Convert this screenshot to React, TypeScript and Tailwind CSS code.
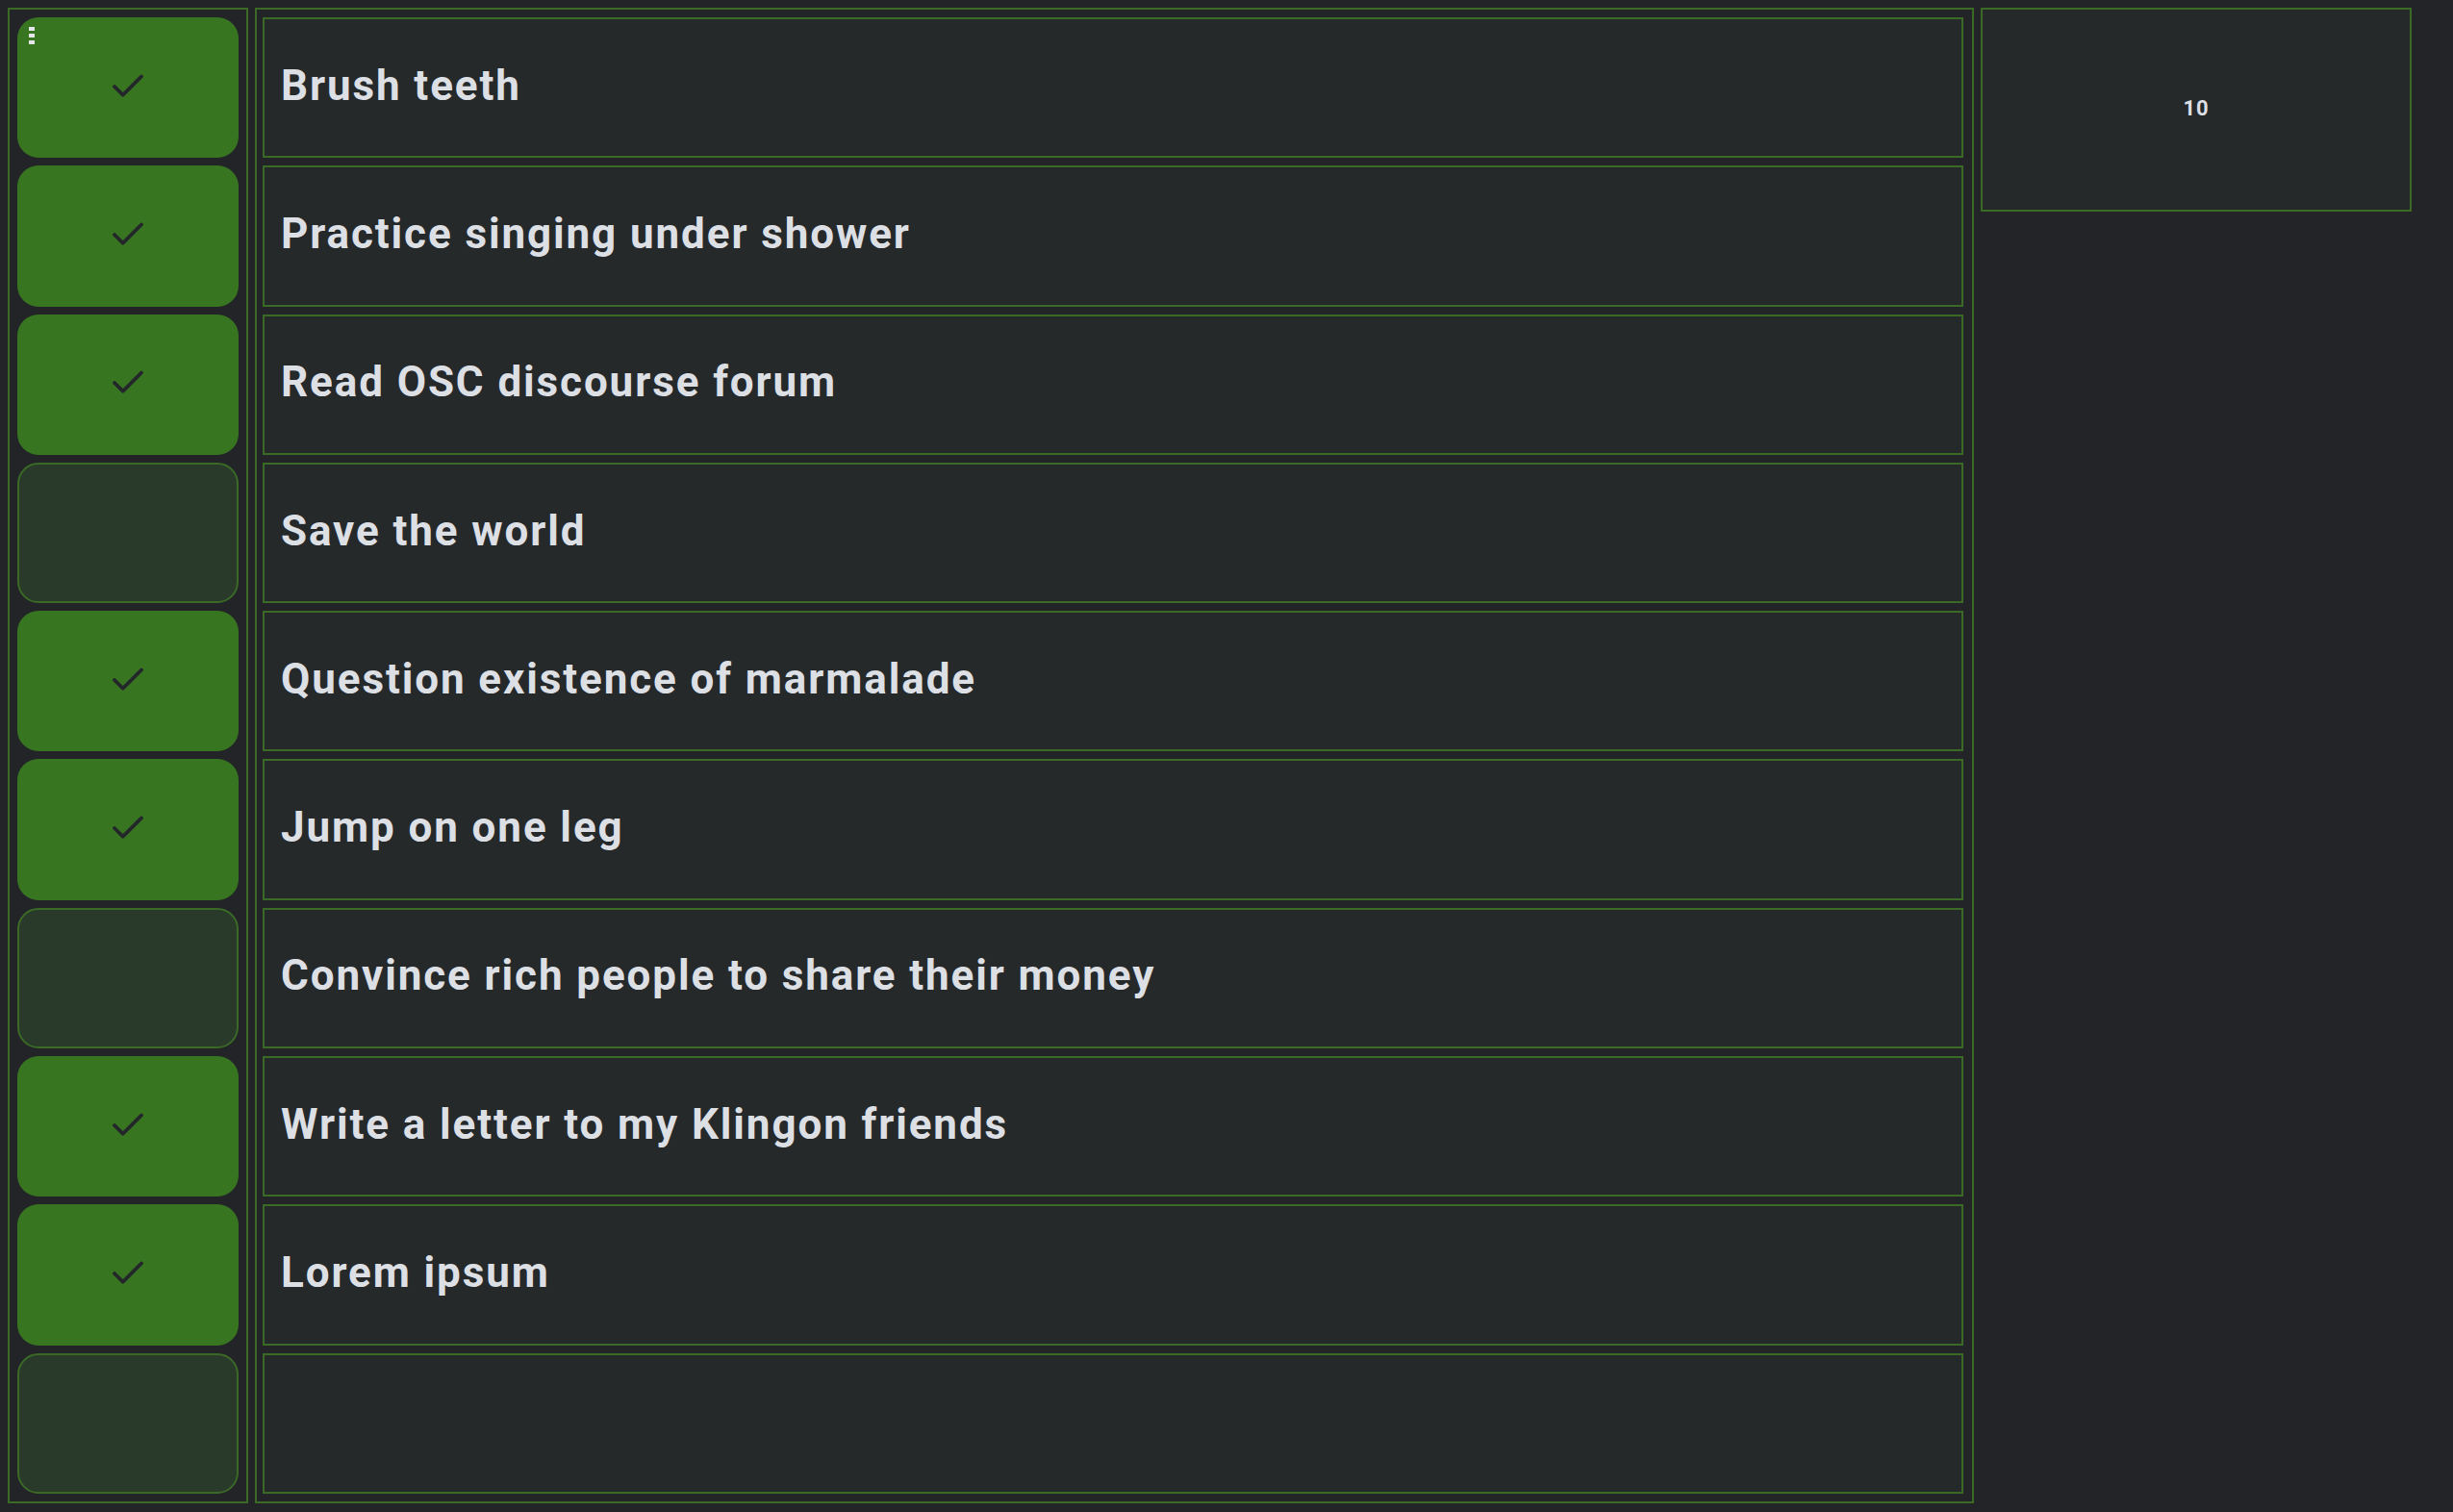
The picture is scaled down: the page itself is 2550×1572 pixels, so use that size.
import { Check } from 'lucide-react';

type Task = {
  label: string;
  done: boolean;
};

const tasks: Task[] = [
  { label: 'Brush teeth', done: true },
  { label: 'Practice singing under shower', done: true },
  { label: 'Read OSC discourse forum', done: true },
  { label: 'Save the world', done: false },
  { label: 'Question existence of marmalade', done: true },
  { label: 'Jump on one leg', done: true },
  { label: 'Convince rich people to share their money', done: false },
  { label: 'Write a letter to my Klingon friends', done: true },
  { label: 'Lorem ipsum', done: true },
  { label: '', done: false },
];

const App = () => {
  return (
    <div className="min-h-screen w-full bg-[#222428] p-2 flex items-start gap-[7px] font-['Roboto',sans-serif]">
      {/* Toggle column */}
      <div className="relative w-[250px] shrink-0 border-2 border-[#3a6a26] p-2 flex flex-col gap-2">
        {/* drag handle */}
        <div className="absolute left-[20px] top-[18px] flex flex-col gap-[3px]">
          <div className="w-[6px] h-[4px] bg-[#e4e6ea]" />
          <div className="w-[6px] h-[4px] bg-[#e4e6ea]" />
          <div className="w-[6px] h-[4px] bg-[#e4e6ea]" />
        </div>
        {tasks.map((task, index) => (
          <div
            key={index}
            className={`h-[146.3px] rounded-[22px] flex items-center justify-center ${
              task.done
                ? 'bg-[#387520]'
                : 'bg-[#2a3a2a] border-2 border-[#3a6a26]'
            }`}
          >
            {task.done && (
              <Check size={42} strokeWidth={2.2} className="text-[#23262a] -mt-[3px]" />
            )}
          </div>
        ))}
      </div>

      {/* Label column */}
      <div className="w-[1787px] shrink-0 border-2 border-[#3a6a26] py-2 pl-[6px] pr-[9px] flex flex-col gap-2">
        {tasks.map((task, index) => (
          <div
            key={index}
            className="h-[146.3px] border-2 border-[#3a6a26] bg-[#25292a] flex items-center pl-[17px]"
          >
            <span className="text-[44px] font-bold tracking-[0.043em] text-[#dcdfe4] -mt-[5px]">
              {task.label}
            </span>
          </div>
        ))}
      </div>

      {/* Counter panel */}
      <div className="w-[448px] h-[212px] shrink-0 border-2 border-[#3a6a26] bg-[#25292a] flex items-center justify-center">
        <span className="text-[22px] font-bold tracking-[0.04em] text-[#dcdfe4] -mt-[4px]">10</span>
      </div>
    </div>
  );
};

export default App;
